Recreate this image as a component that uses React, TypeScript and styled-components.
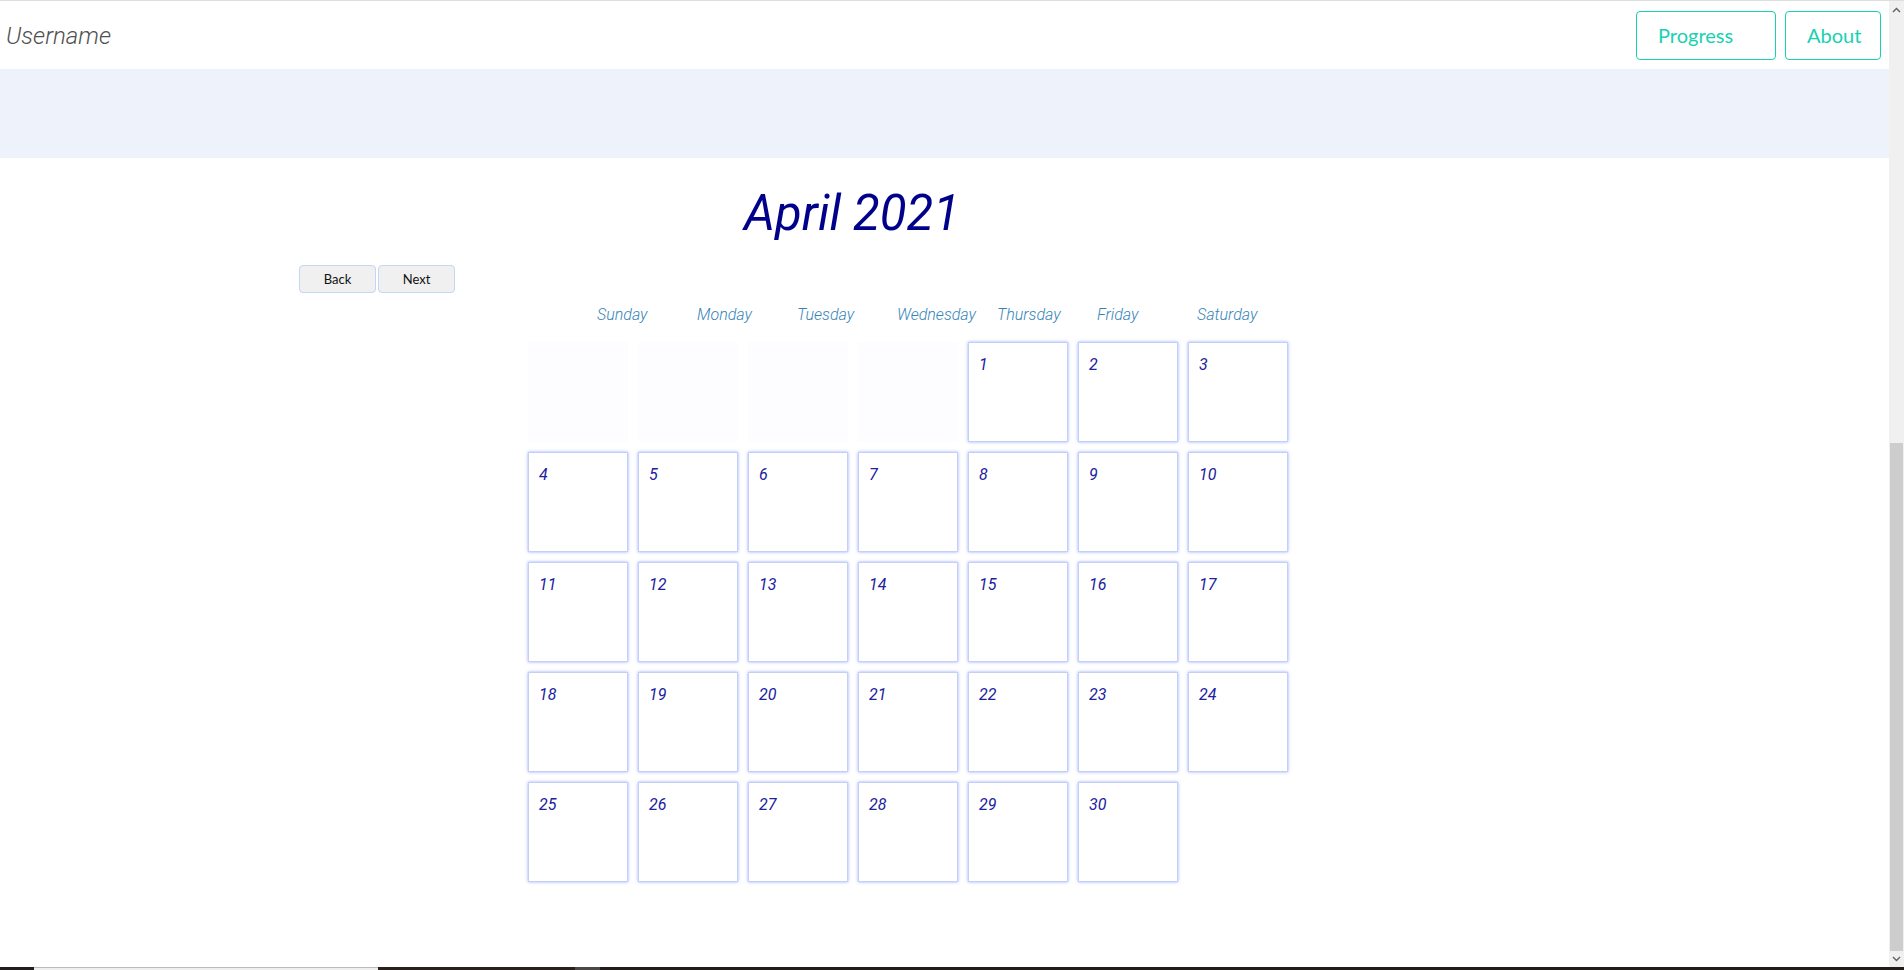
import * as React from "react";
import styled, { createGlobalStyle } from "styled-components";

const GlobalStyle = createGlobalStyle`
  html, body {
    margin: 0;
    padding: 0;
    background: #ffffff;
    overflow: hidden;
  }
  * {
    box-sizing: border-box;
  }
`;

const WEEKDAYS = [
  "Sunday",
  "Monday",
  "Tuesday",
  "Wednesday",
  "Thursday",
  "Friday",
  "Saturday",
];

// April 2021 starts on a Thursday
const LEADING_BLANKS = 4;
const DAYS_IN_MONTH = 30;

const Chevron: React.FC<{ dir: "up" | "down" }> = ({ dir }) => (
  <svg width="9" height="6" viewBox="0 0 9 6" fill="none">
    <polyline
      points={dir === "up" ? "1,5 4.5,1.5 8,5" : "1,1 4.5,4.5 8,1"}
      stroke="#606060"
      strokeWidth="1.4"
    />
  </svg>
);

export default function App() {
  const cells: (number | null)[] = [
    ...Array.from({ length: LEADING_BLANKS }, () => null),
    ...Array.from({ length: DAYS_IN_MONTH }, (_, i) => i + 1),
  ];

  return (
    <Screen>
      <GlobalStyle />
      <Viewport>
        <Page>
          <TopBar>
            <UserName>Username</UserName>
            <NavActions>
              <NavButton $wide>Progress</NavButton>
              <NavButton>About</NavButton>
            </NavActions>
          </TopBar>
          <Banner />

          <Main>
            <MonthTitle>April 2021</MonthTitle>
            <Controls>
              <PagerButton>Back</PagerButton>
              <PagerButton>Next</PagerButton>
            </Controls>

            <Calendar>
              <WeekRow>
                {WEEKDAYS.map((d) => (
                  <WeekLabel key={d}>{d}</WeekLabel>
                ))}
              </WeekRow>
              <DayGrid>
                {cells.map((day, i) =>
                  day === null ? (
                    <DayCell key={`b${i}`} $blank />
                  ) : (
                    <DayCell key={day}>
                      <DayNumber>{day}</DayNumber>
                    </DayCell>
                  )
                )}
              </DayGrid>
            </Calendar>
          </Main>
        </Page>

        <ScrollBar>
          <ScrollArrow>
            <Chevron dir="up" />
          </ScrollArrow>
          <ScrollSpacer />
          <ScrollThumb />
          <ScrollArrow $bottom>
            <Chevron dir="down" />
          </ScrollArrow>
        </ScrollBar>
      </Viewport>

      <Taskbar>
        <TaskSegment $color="#231d20" $width={34} />
        <TaskSegment $color="#efefef" $width={344} $light />
        <TaskSegment $color="#2a1f1a" $width={197} />
        <TaskSegment $color="#4d4848" $width={25} />
        <TaskSegment $color="#241c1b" />
      </Taskbar>
    </Screen>
  );
}

const Screen = styled.div`
  width: 1904px;
  height: 970px;
  display: flex;
  flex-direction: column;
  border-top: 1px solid #dedede;
  overflow: hidden;
`;

const Viewport = styled.div`
  flex: 1;
  display: flex;
  min-height: 0;
`;

const Page = styled.div`
  flex: 1;
  min-width: 0;
  display: flex;
  flex-direction: column;
  background: #ffffff;
`;

const TopBar = styled.header`
  height: 68px;
  display: flex;
  align-items: center;
  justify-content: space-between;
  padding: 0 8px 0 6px;
`;

const UserName = styled.div`
  font-family: Roboto, "Liberation Sans", sans-serif;
  font-style: italic;
  font-weight: 300;
  font-size: 24px;
  padding-top: 2px;
  color: #505050;
`;

const NavActions = styled.nav`
  display: flex;
  gap: 9px;
`;

const NavButton = styled.button<{ $wide?: boolean }>`
  height: 49px;
  width: ${(p) => (p.$wide ? "140px" : "96px")};
  padding: 0 0 0 21px;
  text-align: left;
  background: #ffffff;
  border: 1px solid #17d1b0;
  border-radius: 4px;
  color: #17d1b0;
  font-family: Lato, "Open Sans", sans-serif;
  font-size: 20px;
  cursor: pointer;
`;

const Banner = styled.div`
  height: 89px;
  background: #eef2fb;
`;

const Main = styled.main`
  padding: 28px 0 0 299px;
  display: flex;
  flex-direction: column;
  align-items: flex-start;
`;

const MonthTitle = styled.h1`
  width: 1106px;
  margin: 0;
  text-align: center;
  font-family: Roboto, "Liberation Sans", sans-serif;
  font-style: italic;
  font-weight: 400;
  font-size: 49px;
  line-height: 56px;
  color: #00008a;
`;

const Controls = styled.div`
  margin-top: 23px;
  display: flex;
  gap: 2px;
`;

const PagerButton = styled.button`
  width: 77px;
  height: 28px;
  padding: 0;
  background: #f0f0f0;
  border: 1px solid #c3d6f4;
  border-radius: 4px;
  font-family: Lato, "Open Sans", sans-serif;
  font-size: 13px;
  color: #111111;
  cursor: pointer;
`;

const Calendar = styled.section`
  margin: 12px 0 0 229px;
  display: flex;
  flex-direction: column;
`;

const WeekRow = styled.div`
  display: grid;
  grid-template-columns: repeat(7, 100px);
  padding-left: 69px;
`;

const WeekLabel = styled.div`
  font-family: Roboto, "Liberation Sans", sans-serif;
  font-style: italic;
  font-weight: 300;
  font-size: 16px;
  line-height: 19px;
  color: #3584b8;
`;

const DayGrid = styled.div`
  margin-top: 18px;
  display: grid;
  grid-template-columns: repeat(7, 100px);
  grid-auto-rows: 100px;
  gap: 10px;
`;

const DayCell = styled.div<{ $blank?: boolean }>`
  padding: 12px 10px;
  background: ${(p) => (p.$blank ? "#fdfcff" : "#ffffff")};
  border: ${(p) => (p.$blank ? "none" : "1px solid #c6cff6")};
  box-shadow: ${(p) => (p.$blank ? "none" : "0 0 3px rgba(120, 142, 255, 0.75)")};
`;

const DayNumber = styled.span`
  font-family: Roboto, "Liberation Sans", sans-serif;
  font-style: italic;
  font-size: 16px;
  color: #2020a0;
`;

const ScrollBar = styled.div`
  width: 15px;
  display: flex;
  flex-direction: column;
  background: #f0f0f0;
`;

const ScrollArrow = styled.div<{ $bottom?: boolean }>`
  height: ${(p) => (p.$bottom ? "16px" : "17px")};
  display: flex;
  align-items: center;
  justify-content: center;
`;

const ScrollSpacer = styled.div`
  height: 425px;
`;

const ScrollThumb = styled.div`
  flex: 1;
  margin: 0 1px;
  background: #cdcdcd;
`;

const Taskbar = styled.footer`
  height: 3px;
  display: flex;
`;

const TaskSegment = styled.div<{ $color: string; $width?: number; $light?: boolean }>`
  flex: ${(p) => (p.$width ? `0 0 ${p.$width}px` : "1")};
  background: ${(p) => p.$color};
  border-top: ${(p) => (p.$light ? "1px solid #bcbcbc" : "none")};
`;
